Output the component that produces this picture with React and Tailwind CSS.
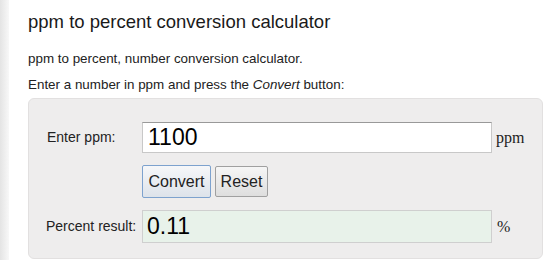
export default function App() {
  return (
    <div className="flex h-[260px] w-[553px] overflow-hidden bg-white font-['Liberation_Sans',Arial,sans-serif] text-[#222]">
      <div className="w-[9px] shrink-0 bg-gradient-to-r from-[#e4e4e4] to-[#f8f8f8]" />
      <div className="flex-1 pl-[19px] pr-[10px]">
        <h1 className="mt-[10px] text-[18.5px] leading-[24px] text-[#1a1a1a]">ppm to percent conversion calculator</h1>
        <p className="mt-[17px] text-[13.4px] leading-[16px]">ppm to percent, number conversion calculator.</p>
        <p className="mt-[10px] text-[13.4px] leading-[16px]">
          Enter a number in ppm and press the <i>Convert</i> button:
        </p>
        <div className="mt-[5px] h-[161px] rounded-[6px] border border-[#e2e0e0] bg-[#eeeded] pt-[23px]">
          <div className="flex items-center">
            <label className="w-[113px] shrink-0 pl-[18px] text-[14px]">Enter ppm:</label>
            <div className="h-[31px] w-[350px] border border-[#c8c8c8] border-t-[#999] bg-white pl-[5px] text-[23px] leading-[29px] text-black">
              1100
            </div>
            <span className="pl-[4px] font-['Liberation_Serif',serif] text-[16px] text-[#222]">ppm</span>
          </div>
          <div className="mt-[12px] flex gap-[4px] pl-[113px]">
            <button className="h-[33px] w-[69px] rounded-[2px] border border-[#7da2ce] bg-gradient-to-b from-[#f6f7f9] to-[#dde3ea] text-[16px] text-[#222]">
              Convert
            </button>
            <button className="mt-[1px] h-[31px] w-[53px] rounded-[2px] border border-[#a0a0a0] bg-gradient-to-b from-[#f6f6f6] to-[#dedede] text-[16px] text-[#222]">
              Reset
            </button>
          </div>
          <div className="mt-[12px] flex items-center">
            <label className="w-[113px] shrink-0 pl-[17px] text-[14px]">Percent result:</label>
            <div className="h-[33px] w-[350px] border border-[#cfcfcf] bg-[#e8f2ea] pl-[4px] text-[23px] leading-[31px] text-black">
              0.11
            </div>
            <span className="pl-[5px] font-['Liberation_Serif',serif] text-[16px] text-[#222]">%</span>
          </div>
        </div>
      </div>
    </div>
  );
}
